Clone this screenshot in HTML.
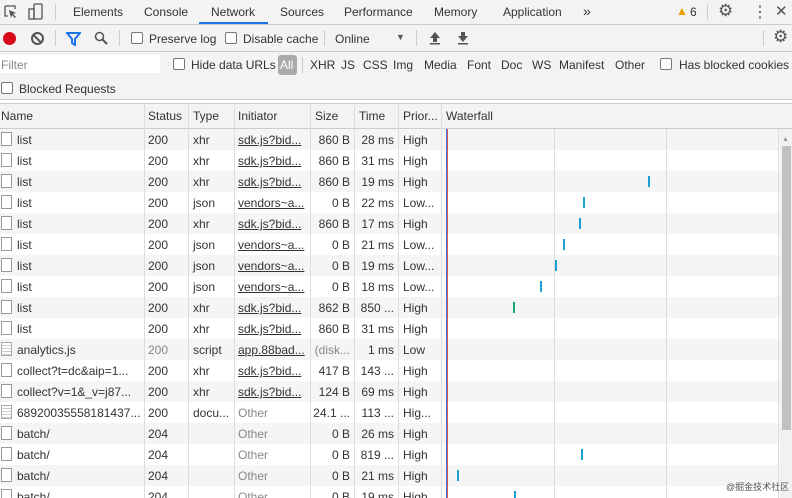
<!DOCTYPE html>
<html style="overflow:hidden;height:498px"><head><style>
*{box-sizing:border-box;margin:0;padding:0}
body{width:792px;height:498px;overflow:hidden;background:#fff;font-family:"Liberation Sans",sans-serif;font-size:12px;color:#333;position:relative}
.abs{position:absolute}
.bar1{top:0;left:0;width:792px;height:25px;background:#f3f3f3;border-bottom:1px solid #ccc}
.bar2{top:25px;left:0;width:792px;height:27px;background:#f3f3f3;border-bottom:1px solid #ccc}
.bar3{top:52px;left:0;width:792px;height:48px;background:#f3f3f3;border-bottom:1px solid #ccc}
.t{position:absolute;white-space:nowrap;color:#333}
.cb{position:absolute;width:12px;height:12px;border:1px solid #777;border-radius:2px;background:#fff}
.hdr{top:103px;left:0;width:792px;height:26px;background:#f3f3f3;border-bottom:1px solid #ccc;border-top:1px solid #ccc}
.row{position:absolute;left:0;width:780px;height:21px}
.row span{position:absolute;top:4px;white-space:nowrap}
.g{background:#f5f5f5}
.vl{position:absolute;top:103px;height:395px;width:1px;background:#ddd}
.ic{position:absolute;left:1px;top:3px;width:11px;height:14px;border:1px solid #999;background:#fff}
u{text-decoration:underline}
.gr{color:#888}
</style></head><body>
<div class="abs bar1"></div>
<svg class="abs" style="left:3px;top:4px" width="16" height="16" viewBox="0 0 16 16"><path d="M2 2h10v3M2 2v10h3" stroke="#555" fill="none" stroke-width="1.3"/><path d="M6 6l7 3-3 1 3 3-1 1-3-3-1 3z" fill="#555"/></svg>
<svg class="abs" style="left:28px;top:3px" width="16" height="18" viewBox="0 0 16 18"><rect x="6" y="1" width="8" height="15" rx="1" stroke="#555" fill="none" stroke-width="1.3"/><rect x="1" y="6" width="5" height="10" stroke="#555" fill="none" stroke-width="1.3"/></svg>
<div class="abs" style="left:55px;top:4px;width:1px;height:16px;background:#ccc"></div>
<div class="t" style="left:73px;top:5px">Elements</div>
<div class="t" style="left:144px;top:5px">Console</div>
<div class="t" style="left:211px;top:5px;color:#333">Network</div>
<div class="abs" style="left:199px;top:22px;width:69px;height:2px;background:#1a73e8"></div>
<div class="t" style="left:280px;top:5px">Sources</div>
<div class="t" style="left:344px;top:5px">Performance</div>
<div class="t" style="left:434px;top:5px">Memory</div>
<div class="t" style="left:503px;top:5px">Application</div>
<div class="t" style="left:583px;top:3px;font-size:14px">»</div>
<div class="t" style="left:676px;top:4px;color:#e8a200;font-size:12px">▲</div><div class="t" style="left:690px;top:5px">6</div>
<div class="abs" style="left:707px;top:4px;width:1px;height:16px;background:#ccc"></div>
<div class="t" style="left:718px;top:1px;font-size:17px;color:#555">⚙</div>
<div class="t" style="left:752px;top:2px;font-size:16px;color:#555">⋮</div>
<div class="t" style="left:775px;top:2px;font-size:15px;color:#555">✕</div>
<div class="abs bar2"></div>
<div class="abs" style="left:3px;top:32px;width:13px;height:13px;border-radius:50%;background:#d8081b"></div>
<div class="abs" style="left:31px;top:32px;width:13px;height:13px;border-radius:50%;border:2px solid #555"></div>
<div class="abs" style="left:32px;top:38px;width:11px;height:2px;background:#555;transform:rotate(45deg)"></div>
<div class="abs" style="left:55px;top:30px;width:1px;height:16px;background:#ccc"></div>
<svg class="abs" style="left:66px;top:32px" width="15" height="14" viewBox="0 0 15 14"><path d="M1 1h13l-5 6v6l-3-2V7z" fill="none" stroke="#1a73e8" stroke-width="2"/></svg>
<svg class="abs" style="left:94px;top:31px" width="14" height="14" viewBox="0 0 14 14"><circle cx="5.5" cy="5.5" r="4" stroke="#555" stroke-width="1.6" fill="none"/><path d="M8.5 8.5l4.5 4.5" stroke="#555" stroke-width="2"/></svg>
<div class="abs" style="left:119px;top:30px;width:1px;height:16px;background:#ccc"></div>
<div class="cb" style="left:131px;top:32px"></div><div class="t" style="left:149px;top:32px">Preserve log</div>
<div class="cb" style="left:225px;top:32px"></div><div class="t" style="left:243px;top:32px">Disable cache</div>
<div class="abs" style="left:324px;top:30px;width:1px;height:16px;background:#ccc"></div>
<div class="t" style="left:335px;top:32px">Online</div>
<div class="t" style="left:396px;top:32px;font-size:9px;color:#555">▼</div>
<div class="abs" style="left:416px;top:30px;width:1px;height:16px;background:#ccc"></div>
<svg class="abs" style="left:429px;top:31px" width="12" height="14" viewBox="0 0 12 14"><path d="M6 1l5 6H8v4H4V7H1z" fill="#555"/><rect x="1" y="12" width="10" height="1.5" fill="#555"/></svg>
<svg class="abs" style="left:457px;top:31px" width="12" height="14" viewBox="0 0 12 14"><path d="M6 11l5-6H8V1H4v4H1z" fill="#555"/><rect x="1" y="12" width="10" height="1.5" fill="#555"/></svg>
<div class="abs" style="left:763px;top:30px;width:1px;height:16px;background:#ccc"></div>
<div class="t" style="left:773px;top:27px;font-size:17px;color:#555">⚙</div>
<div class="abs bar3"></div>
<div class="abs" style="left:0;top:55px;width:160px;height:18px;background:#fff"></div>
<div class="t" style="left:1px;top:58px;color:#888">Filter</div>
<div class="cb" style="left:173px;top:58px"></div><div class="t" style="left:191px;top:58px">Hide data URLs</div>
<div class="abs" style="left:278px;top:55px;width:19px;height:20px;border-radius:3px;background:#aaa"></div><div class="t" style="left:280px;top:58px;color:#fff">All</div>
<div class="abs" style="left:302px;top:57px;width:1px;height:16px;background:#ccc"></div>
<div class="t" style="left:310px;top:58px">XHR</div>
<div class="t" style="left:341px;top:58px">JS</div>
<div class="t" style="left:363px;top:58px">CSS</div>
<div class="t" style="left:393px;top:58px">Img</div>
<div class="t" style="left:424px;top:58px">Media</div>
<div class="t" style="left:467px;top:58px">Font</div>
<div class="t" style="left:501px;top:58px">Doc</div>
<div class="t" style="left:532px;top:58px">WS</div>
<div class="t" style="left:559px;top:58px">Manifest</div>
<div class="t" style="left:615px;top:58px">Other</div>
<div class="cb" style="left:660px;top:58px"></div><div class="t" style="left:679px;top:58px">Has blocked cookies</div>
<div class="cb" style="left:1px;top:82px"></div><div class="t" style="left:19px;top:82px">Blocked Requests</div>
<div class="abs hdr"></div>
<div class="t" style="left:1px;top:109px">Name</div>
<div class="t" style="left:148px;top:109px">Status</div>
<div class="t" style="left:193px;top:109px">Type</div>
<div class="t" style="left:238px;top:109px">Initiator</div>
<div class="t" style="left:315px;top:109px">Size</div>
<div class="t" style="left:359px;top:109px">Time</div>
<div class="t" style="left:403px;top:109px">Prior...</div>
<div class="t" style="left:446px;top:109px">Waterfall</div>
<div id="rows"></div>
<div class="vl" style="left:144px"></div><div class="vl" style="left:188px"></div><div class="vl" style="left:234px"></div><div class="vl" style="left:310px"></div><div class="vl" style="left:354px"></div><div class="vl" style="left:398px"></div><div class="vl" style="left:441px"></div>
<div class="vl" style="left:554px;top:129px;height:369px"></div><div class="vl" style="left:666px;top:129px;height:369px"></div><div class="vl" style="left:778px;top:129px;height:369px"></div>
<div class="abs" style="left:446px;top:129px;width:1px;height:369px;background:#4a6fd0"></div>
<div class="abs" style="left:447px;top:129px;width:1px;height:369px;background:#d05a6a"></div>
<div class="abs" style="left:780px;top:129px;width:12px;height:369px;background:#f1f1f1"></div>
<div class="abs" style="left:782px;top:146px;width:9px;height:284px;background:#c1c1c1"></div>
<div class="t" style="left:782px;top:136px;font-size:7px;color:#999">▲</div>
<div class="t" style="left:726px;top:480px;font-size:9px;color:#555;font-family:'Liberation Sans','Noto Sans CJK SC',sans-serif">@掘金技术社区</div>
<script>
const d=[
["list","200","xhr","sdk.js?bid...","860 B","28 ms","High",0],
["list","200","xhr","sdk.js?bid...","860 B","31 ms","High",0],
["list","200","xhr","sdk.js?bid...","860 B","19 ms","High",648],
["list","200","json","vendors~a...","0 B","22 ms","Low...",583],
["list","200","xhr","sdk.js?bid...","860 B","17 ms","High",579],
["list","200","json","vendors~a...","0 B","21 ms","Low...",563],
["list","200","json","vendors~a...","0 B","19 ms","Low...",555],
["list","200","json","vendors~a...","0 B","18 ms","Low...",540],
["list","200","xhr","sdk.js?bid...","862 B","850 ...","High",513],
["list","200","xhr","sdk.js?bid...","860 B","31 ms","High",0],
["analytics.js","200","script","app.88bad...","(disk...","1 ms","Low",0,1],
["collect?t=dc&aip=1...","200","xhr","sdk.js?bid...","417 B","143 ...","High",0],
["collect?v=1&_v=j87...","200","xhr","sdk.js?bid...","124 B","69 ms","High",0],
["68920035558181437...","200","docu...","Other","24.1 ...","113 ...","Hig...",0,2],
["batch/","204","","Other","0 B","26 ms","High",0],
["batch/","204","","Other","0 B","819 ...","High",581],
["batch/","204","","Other","0 B","21 ms","High",457],
["batch/","204","","Other","0 B","19 ms","High",514]];
let h="";
d.forEach((r,i)=>{const y=129+i*21;const doc=r[8];
const ini=r[3]=="Other"?`<span class="gr" style="left:238px">Other</span>`:`<span style="left:238px"><u>${r[3]}</u></span>`;
h+=`<div class="row ${i%2==0?'g':''}" style="top:${y}px;${y+21>498?'height:'+(498-y)+'px;overflow:hidden':''}"><div class="ic" ${doc?'style="border-color:#aaa;background:repeating-linear-gradient(#fff 0 2px,#ccc 2px 3px)"':''}></div>
<span style="left:17px">${r[0]}</span><span style="left:148px${doc==1?';color:#888':''}">${r[1]}</span><span style="left:193px">${r[2]}</span>${ini}
<span style="right:${780-350}px${r[4].startsWith('(')?';color:#888':''}">${r[4]}</span><span style="right:${780-394}px">${r[5]}</span><span style="left:403px">${r[6]}</span>
${r[7]?`<div style="position:absolute;left:${r[7]}px;top:5px;width:2px;height:11px;background:${r[7]==513?'#1aaa7a':'#1a9fd0'}"></div>`:''}</div>`;});
document.getElementById("rows").innerHTML=h;
</script>
</body></html>
